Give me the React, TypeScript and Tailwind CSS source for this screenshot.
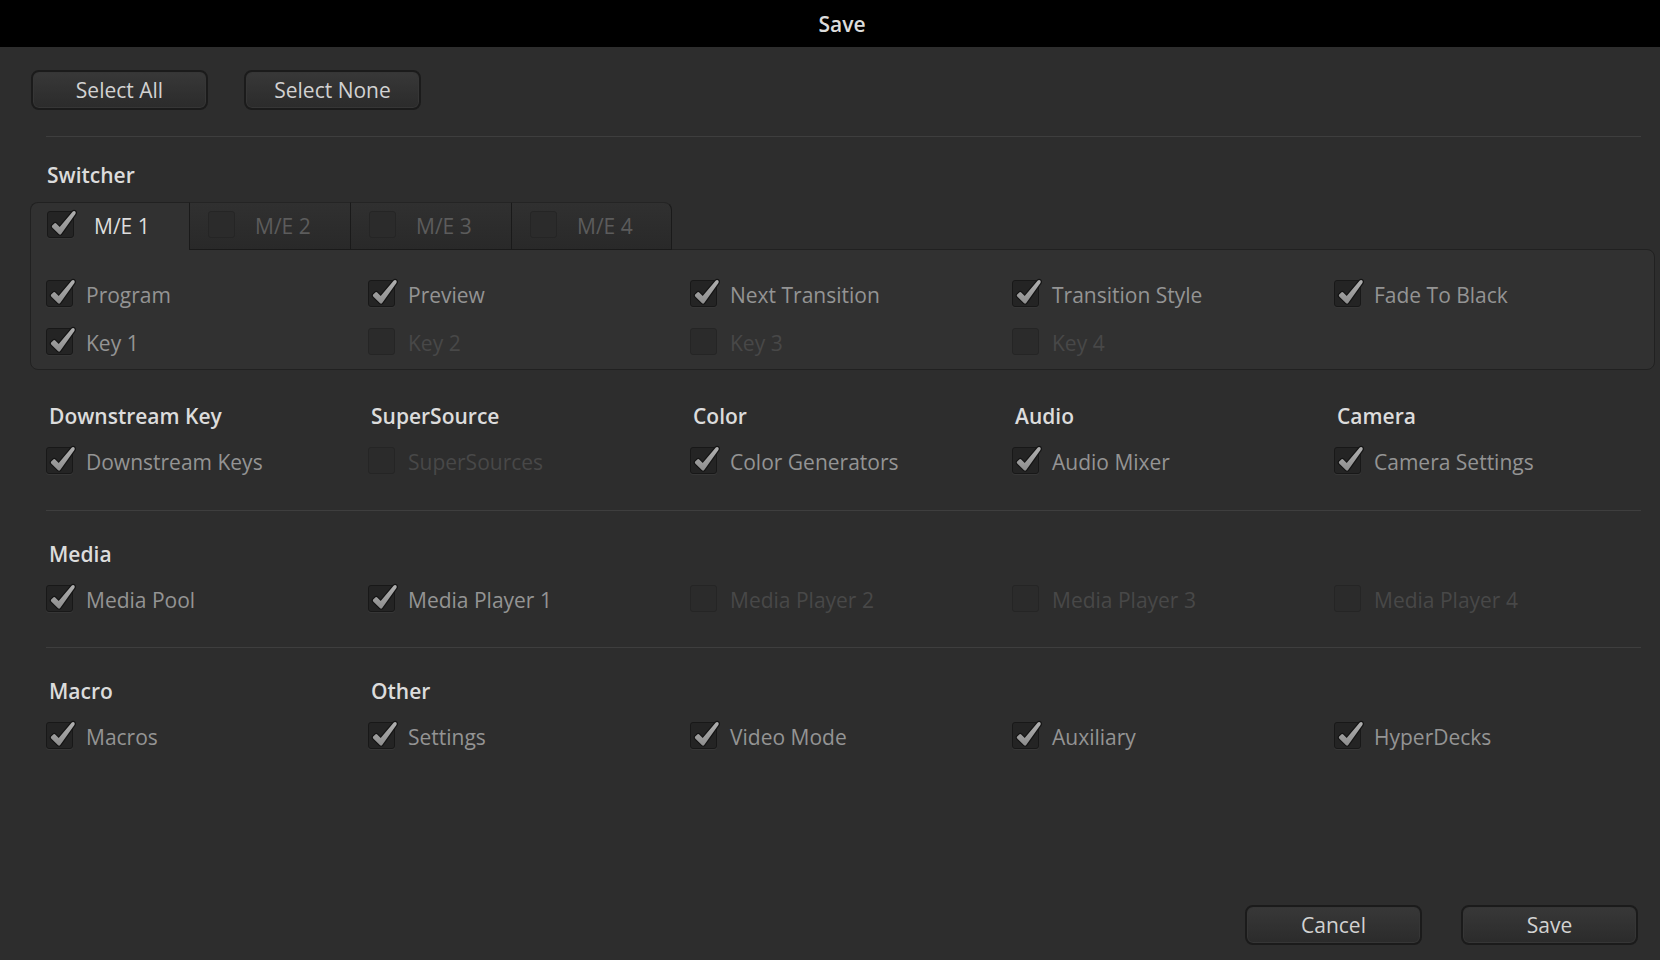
import { useState } from 'react';
import clsx from 'clsx';

interface Option {
  id: string;
  text: string;
  disabled?: boolean;
}

interface Group {
  title?: string;
  option: Option;
}

const mixEffects: Option[] = [
  { id: 'me1', text: 'M/E 1' },
  { id: 'me2', text: 'M/E 2', disabled: true },
  { id: 'me3', text: 'M/E 3', disabled: true },
  { id: 'me4', text: 'M/E 4', disabled: true }
];

const switcherOptions: Option[] = [
  { id: 'program', text: 'Program' },
  { id: 'preview', text: 'Preview' },
  { id: 'next-transition', text: 'Next Transition' },
  { id: 'transition-style', text: 'Transition Style' },
  { id: 'fade-to-black', text: 'Fade To Black' },
  { id: 'key1', text: 'Key 1' },
  { id: 'key2', text: 'Key 2', disabled: true },
  { id: 'key3', text: 'Key 3', disabled: true },
  { id: 'key4', text: 'Key 4', disabled: true }
];

const deviceGroups: Group[] = [
  { title: 'Downstream Key', option: { id: 'downstream-keys', text: 'Downstream Keys' } },
  { title: 'SuperSource', option: { id: 'super-sources', text: 'SuperSources', disabled: true } },
  { title: 'Color', option: { id: 'color-generators', text: 'Color Generators' } },
  { title: 'Audio', option: { id: 'audio-mixer', text: 'Audio Mixer' } },
  { title: 'Camera', option: { id: 'camera-settings', text: 'Camera Settings' } }
];

const mediaGroups: Group[] = [
  { title: 'Media', option: { id: 'media-pool', text: 'Media Pool' } },
  { option: { id: 'media-player1', text: 'Media Player 1' } },
  { option: { id: 'media-player2', text: 'Media Player 2', disabled: true } },
  { option: { id: 'media-player3', text: 'Media Player 3', disabled: true } },
  { option: { id: 'media-player4', text: 'Media Player 4', disabled: true } }
];

const otherGroups: Group[] = [
  { title: 'Macro', option: { id: 'macros', text: 'Macros' } },
  { title: 'Other', option: { id: 'settings', text: 'Settings' } },
  { option: { id: 'video-mode', text: 'Video Mode' } },
  { option: { id: 'auxiliary', text: 'Auxiliary' } },
  { option: { id: 'hyperdecks', text: 'HyperDecks' } }
];

const allOptions = [
  ...mixEffects,
  ...switcherOptions,
  ...[...deviceGroups, ...mediaGroups, ...otherGroups].map((group) => group.option)
];

const enabledIds = allOptions.filter((option) => !option.disabled).map((option) => option.id);

interface CheckProps {
  option: Option;
  checked: boolean;
  onToggle: (id: string) => void;
  tab?: boolean;
}

const Check: React.FC<CheckProps> = ({ option, checked, onToggle, tab }) => {
  return (
    <label
      htmlFor={option.id}
      className={clsx(
        'flex h-[27px] items-center',
        tab ? 'gap-5' : 'gap-[13px]',
        tab && (option.disabled ? 'text-[#5c5c5c]' : 'text-[#dedede]'),
        !tab && (option.disabled ? 'text-[#484848]' : 'text-[#949494]')
      )}
    >
      <span className="relative size-[27px] shrink-0">
        <input
          id={option.id}
          type="checkbox"
          checked={checked}
          disabled={option.disabled}
          onChange={() => onToggle(option.id)}
          className="block size-full appearance-none rounded-[3px] border border-[#181818] bg-[#242424] shadow-[0_1px_0_#363636] disabled:border-[#252525] disabled:bg-[#2b2b2b] disabled:shadow-none"
        />
        {checked && (
          <svg viewBox="0 0 32 30" className="pointer-events-none absolute -top-0.5 left-0 h-[30px] w-8 max-w-none">
            <defs>
              <linearGradient id={`${option.id}-fill`} x1="0" y1="0" x2="0" y2="1">
                <stop offset="0" stopColor="#b0b0b0" />
                <stop offset="1" stopColor="#8e8e8e" />
              </linearGradient>
            </defs>
            <path
              d="M5.2 16.6 7.6 14.3Q8.4 13.7 9.2 14.5L12.7 18 25.6 2.8Q27 1.4 28.3 2.5 29.2 3.5 28.4 5L14.2 25Q13.2 26.2 12.1 25.2L5.2 18.4Q4.4 17.4 5.2 16.6Z"
              fill={`url(#${option.id}-fill)`}
              stroke="#141414"
              strokeWidth="2.4"
              strokeLinejoin="round"
              paintOrder="stroke"
            />
          </svg>
        )}
      </span>
      <span className="pt-0.5">{option.text}</span>
    </label>
  );
};

const Button: React.FC<{ text: string; onClick?: () => void }> = ({ text, onClick }) => {
  return (
    <button
      type="button"
      onClick={onClick}
      className="h-10 w-[177px] rounded-lg border-2 border-[#1b1b1b] bg-linear-to-b from-[#383838] to-[#2b2b2b] text-[#d2d2d2] shadow-[inset_0_0_0_1px_#363636]"
    >
      {text}
    </button>
  );
};

const Divider = () => <hr className="mr-3.5 border-t border-[#3e3e3e]" />;

export default function App() {
  const [selected, setSelected] = useState<string[]>(enabledIds);

  const toggle = (id: string) => {
    setSelected((prev) => (prev.includes(id) ? prev.filter((item) => item !== id) : [...prev, id]));
  };

  const renderGroups = (groups: Group[]) => (
    <div className="-mr-px grid grid-cols-5">
      {groups.map(({ title, option }) => (
        <div key={option.id} className="flex flex-col gap-[18px]">
          <h2 className="h-7 pl-[3px] leading-[30px] font-semibold text-[#dcdcdc]">{title}</h2>
          <Check option={option} checked={selected.includes(option.id)} onToggle={toggle} />
        </div>
      ))}
    </div>
  );

  return (
    <div className="flex min-h-screen flex-col bg-[#2d2d2d] font-['Open_Sans','Noto_Sans',sans-serif] text-[21px] leading-7 text-[#d2d2d2] select-none">
      <header className="flex h-[47px] items-center justify-center bg-black pl-6">
        <h1 className="font-semibold text-[#dcdcdc]">Save</h1>
      </header>

      <main className="flex flex-1 flex-col pr-[5px] pl-[30px]">
        <div className="flex gap-9 pt-[23px] pb-[26px] pl-px">
          <Button text="Select All" onClick={() => setSelected(enabledIds)} />
          <Button text="Select None" onClick={() => setSelected([])} />
        </div>

        <div className="pl-4">
          <Divider />
        </div>

        <section className="pt-[23px]">
          <h2 className="mb-3.5 h-7 pl-[17px] leading-[30px] font-semibold text-[#dcdcdc]">Switcher</h2>
          <div className="relative z-10 -mb-px flex">
            {mixEffects.map((option, index) => (
              <div
                key={option.id}
                className={clsx(
                  'h-12 border-t border-l pt-2',
                  index === 0
                    ? 'w-[159px] rounded-tl-lg border-[#212121] bg-[#313131] pl-4'
                    : 'w-[161px] border-b border-[#1a1a1a] border-t-[#242424] bg-linear-to-b from-[#303030] to-[#292929] pl-[18px]',
                  index === mixEffects.length - 1 && 'rounded-tr-lg border-r'
                )}
              >
                <Check tab option={option} checked={selected.includes(option.id)} onToggle={toggle} />
              </div>
            ))}
          </div>
          <div className="rounded-lg rounded-tl-none border border-[#212121] bg-[#313131] pt-[30px] pb-3.5 pl-[15px]">
            <div className="-mr-0.5 grid grid-cols-5 gap-y-[21px]">
              {switcherOptions.map((option) => (
                <Check key={option.id} option={option} checked={selected.includes(option.id)} onToggle={toggle} />
              ))}
            </div>
          </div>
        </section>

        <section className="pt-[31px] pb-9 pl-4">{renderGroups(deviceGroups)}</section>

        <div className="pl-4">
          <Divider />
        </div>

        <section className="pt-7 pb-[35px] pl-4">{renderGroups(mediaGroups)}</section>

        <div className="pl-4">
          <Divider />
        </div>

        <section className="pt-7 pb-[35px] pl-4">{renderGroups(otherGroups)}</section>

        <footer className="mt-auto flex justify-end gap-[39px] pr-[17px] pb-[15px]">
          <Button text="Cancel" />
          <Button text="Save" />
        </footer>
      </main>
    </div>
  );
}
